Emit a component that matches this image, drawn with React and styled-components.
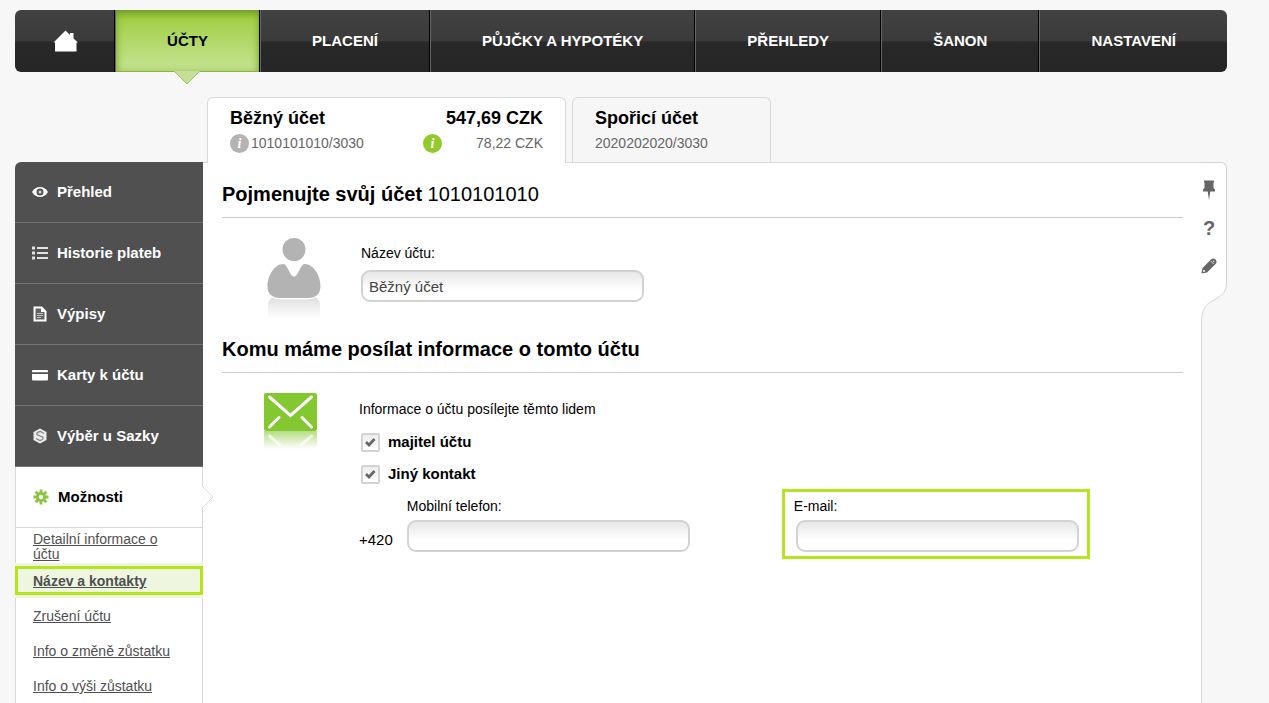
import React from "react"
import styled, { createGlobalStyle, css } from "styled-components"

const GlobalStyle = createGlobalStyle`
  *, *::before, *::after {
    box-sizing: border-box;
  }

  body {
    margin: 0;
    background: #f7f7f7;
    color: #000;
    font-family: "Liberation Sans", Arial, sans-serif;
    font-size: 14px;
    line-height: 16px;
  }

  button, input {
    font: inherit;
  }
`

const Page = styled.div`
  display: flex;
  flex-direction: column;
  min-height: 100vh;
  padding: 10px 42px 0 15px;
`

/* ---------- top navigation ---------- */

const TopNav = styled.nav`
  display: flex;
  height: 62px;
  border-radius: 6px;
  background: linear-gradient(#414141, #3b3b3b 50%, #303030 50%, #282828 54%, #262626);
`

const NavLink = styled.a`
  position: relative;
  display: flex;
  flex: ${props => (props.$home ? "0 0 100px" : "1 1 auto")};
  align-items: center;
  justify-content: center;
  padding: ${props => (props.$home ? "0 0 0 2px" : "0 50px")};
  border-right: 1px solid #000;
  color: #fff;
  font-size: 15px;
  font-weight: bold;
  text-decoration: none;
  white-space: nowrap;

  & + & {
    border-left: 1px solid #686868;
  }

  &:last-child {
    border-right: 0;
  }

  ${props =>
    props.$active &&
    css`
      color: #000;
      background: linear-gradient(#9ccd3c, #a9d456 30%, #c8e397);
      box-shadow: inset 0 5px 8px -2px #6d9422, inset 0 0 8px #93be40, inset 0 -1px 0 #8fb646;
    `}
`

const NavPointer = styled.svg`
  position: absolute;
  top: 61px;
  left: calc(50% - 13px);
`

/* ---------- account tabs ---------- */

const Tabs = styled.div`
  display: flex;
  gap: 6px;
  margin: 25px 0 0 192px;
`

const Tab = styled.a`
  position: relative;
  display: flex;
  align-items: flex-start;
  justify-content: space-between;
  width: ${props => props.$width}px;
  height: 65px;
  padding: 9px 22px 0;
  border: 1px solid #d9d9d9;
  border-bottom: 0;
  border-radius: 6px 6px 0 0;
  background: #f6f6f6;
  color: #000;
  text-decoration: none;

  ${props =>
    props.$active &&
    css`
      background: #fff;

      &::after {
        content: "";
        position: absolute;
        top: 100%;
        left: 0;
        right: 0;
        height: 1px;
        background: #fff;
      }
    `}
`

const TabTitle = styled.div`
  font-size: 18px;
  font-weight: bold;
  line-height: 22px;
  text-align: ${props => (props.$end ? "right" : "left")};
`

const TabNote = styled.div`
  display: flex;
  align-items: center;
  justify-content: space-between;
  gap: 2px;
  height: 20px;
  margin-top: 4px;
  color: #666;
`

const TabAmount = styled.div`
  min-width: 120px;
`

const InfoDot = styled.span`
  display: flex;
  align-items: center;
  justify-content: center;
  width: 19px;
  height: 19px;
  border-radius: 50%;
  background: ${props => props.$color};
  color: #fff;
  font: italic bold 14px/19px "Liberation Serif", serif;
`

/* ---------- content ---------- */

const Content = styled.div`
  display: flex;
  flex: 1;
`

const Sidebar = styled.nav`
  display: flex;
  flex: 0 0 188px;
  flex-direction: column;
`

const SideLink = styled.a`
  position: relative;
  display: flex;
  align-items: center;
  gap: 9px;
  height: 61px;
  padding-left: 17px;
  border-bottom: 1px solid #747474;
  background: #505050;
  color: #fff;
  font-size: 15px;
  font-weight: bold;
  text-decoration: none;

  &:first-child {
    border-top-left-radius: 6px;
  }

  ${props =>
    props.$active &&
    css`
      border: 1px solid #d9d9d9;
      border-top: 0;
      background: #fff;
      color: #000;
    `}
`

const SidePointer = styled.svg`
  position: absolute;
  top: 19px;
  left: 185px;
`

const SubList = styled.ul`
  flex: 1;
  margin: 0;
  padding: 0;
  border: solid #d9d9d9;
  border-width: 0 1px;
  background: #fff;
  list-style: none;
`

const SubItem = styled.li`
  position: relative;
  display: flex;
  align-items: center;
  height: 35px;
  padding: 2px 17px 0;
  line-height: 15px;

  a {
    color: #505050;
  }

  ${props =>
    props.$active &&
    css`
      margin: 0 -1px;
      padding: 2px 18px 0;
      background: #eff6e0;
      font-weight: bold;

      &::after {
        content: "";
        position: absolute;
        inset: 3px 0;
        border: 3px solid #b5e61d;
        pointer-events: none;
      }
    `}
`

const Main = styled.main`
  flex: 1;
  min-width: 0;
  padding: 0 19px;
  border-top: 1px solid #d9d9d9;
  background: #fff;
`

const Heading = styled.h1`
  margin: 0;
  padding: ${props => props.$top}px 0 11px;
  border-bottom: 1px solid #ccc;
  font-size: 20px;
  line-height: 24px;

  span {
    font-weight: normal;
  }
`

const Section = styled.section`
  display: flex;
  align-items: flex-start;
  padding: ${props => props.$top}px 0 0 42px;
`

const Picture = styled.svg`
  flex: none;
  margin-right: ${props => props.$gap}px;
`

const Field = styled.div`
  display: flex;
  flex-direction: column;
  align-items: flex-start;
  gap: ${props => props.$gap}px;
  padding-top: 8px;
`

const TextInput = styled.input`
  width: 283px;
  height: 32px;
  padding: 0 6px;
  border: 2px solid #d3d3d3;
  border-radius: 9px;
  outline: 0;
  background: linear-gradient(#e7e7e7, #fff 65%);
  color: #444;
  font-size: 15px;
`

const Recipients = styled.div`
  display: flex;
  flex: 1;
  flex-direction: column;
  padding-top: 8px;
`

const Intro = styled.p`
  margin: 0 0 8px;
`

const CheckRow = styled.label`
  display: flex;
  align-items: center;
  gap: 8px;
  height: 32px;
  padding: 2px 0 0 2px;
  font-size: 15px;
  font-weight: bold;
`

const CheckBox = styled.span`
  position: relative;
  display: flex;

  input {
    appearance: none;
    width: 19px;
    height: 19px;
    margin: 0;
    border: 2px solid #d3d3d3;
    border-radius: 2px;
    background: linear-gradient(#eee, #fff);
  }

  svg {
    position: absolute;
    top: 4px;
    left: 4px;
    pointer-events: none;
    visibility: hidden;
  }

  input:checked + svg {
    visibility: visible;
  }
`

const Contacts = styled.div`
  display: flex;
  align-items: flex-start;
  gap: 92px;
`

const Phone = styled.div`
  display: flex;
  align-items: flex-end;
  gap: 14px;
  padding-top: 1px;
`

const Prefix = styled.span`
  padding-bottom: 4px;
  font-size: 15px;
`

const EmailBox = styled.div`
  width: 308px;
  height: 70px;
  padding: 6px 9px;
  border: 3px solid #b5e61d;

  ${TextInput} {
    margin: 6px 0 0 2px;
  }
`

/* ---------- tool rail on the right ---------- */

const Rail = styled.aside`
  display: flex;
  flex: 0 0 26px;
  flex-direction: column;
  margin-left: -1px;

  & > svg {
    flex: none;
  }
`

const Tools = styled.div`
  display: flex;
  flex-direction: column;
  height: 120px;
  padding-top: 8px;
  border: solid #d3d3d3;
  border-width: 1px 1px 0 0;
  border-top-right-radius: 6px;
  background: #fff;
`

const ToolButton = styled.button`
  display: flex;
  flex: none;
  align-items: center;
  justify-content: center;
  width: 16px;
  height: 38px;
  padding: 0;
  border: 0;
  background: none;
  color: #666;
  font-size: 20px;
  font-weight: bold;
`

const RailLine = styled.div`
  flex: 1;
  border-left: 1px solid #d9d9d9;
`

/* ---------- icons ---------- */

const HomeIcon = () => (
  <svg width="26" height="22" viewBox="0 0 26 22" fill="#fff">
    <path d="M12.5 0.5 L17 5 V3 H20.5 V8.4 L25 12.5 H23.5 V21.5 H2 V12.5 H0.500 Z" />
  </svg>
)

const EyeIcon = () => (
  <svg width="16" height="16" viewBox="0 0 16 16">
    <path d="M0 8 C3.500 1.200 12.500 1.200 16 8 C12.500 14.800 3.500 14.800 0 8 Z" fill="#fff" />
    <circle cx="8" cy="8" r="2.500" fill="#ddd" stroke="#505050" strokeWidth="2" />
  </svg>
)

const ListIcon = () => (
  <svg width="16" height="16" viewBox="0 0 16 16" fill="#e2e2e2">
    <path d="M0 1.500h3v3H0z M0 6.500h3v3H0z M0 11.500h3v3H0z M5 2h11v2H5z M5 7h11v2H5z M5 12h11v2H5z" />
  </svg>
)

const DocIcon = () => (
  <svg width="16" height="16" viewBox="0 0 16 16">
    <path d="M2.500 1.500 H9.500 L13.500 5.500 V14.500 H2.500 Z" fill="#626262" stroke="#fff" strokeWidth="2" />
    <path d="M9 1v5h5z" fill="#fff" />
    <path d="M5 7.500h6M5 9.500h6M5 11.500h4" stroke="#c4c4c4" />
  </svg>
)

const CardIcon = () => (
  <svg width="16" height="16" viewBox="0 0 16 16" fill="#fff">
    <path d="M1 3h14a1 1 0 0 1 1 1v1.200H0V4a1 1 0 0 1 1-1z" />
    <path d="M0 7h16v5.500a1 1 0 0 1-1 1H1a1 1 0 0 1-1-1z" />
  </svg>
)

const SazkaIcon = () => (
  <svg width="16" height="16" viewBox="0 0 16 16">
    <path d="M8 0.500 L14.500 4 V12 L8 15.500 L1.500 12 V4 Z" fill="#ececec" />
    <path d="M12 5.500 L8.500 3.500 Q4.500 4 4.800 6.500 L11 9.200 Q11.500 12 8 12.500 L4 10.500" fill="none" stroke="#8a8a8a" strokeWidth="1.300" />
  </svg>
)

const GearIcon = () => (
  <svg width="16" height="16" viewBox="0 0 16 16">
    <g stroke="#8cc63f" strokeWidth="2.800">
      <path d="M8 0.500V15.500M0.500 8H15.500M2.700 2.700L13.300 13.300M13.300 2.700L2.700 13.300" />
    </g>
    <circle cx="8" cy="8" r="5" fill="#8cc63f" />
    <circle cx="8" cy="8" r="2.200" fill="#fff" />
  </svg>
)

const PersonPicture = () => (
  <Picture $gap={37} width="60" height="84" viewBox="0 0 60 84">
    <defs>
      <linearGradient id="personFade" x1="0" y1="0" x2="0" y2="1">
        <stop offset="0" stopColor="#e0e0e0" />
        <stop offset="1" stopColor="#fff" />
      </linearGradient>
    </defs>
    <circle cx="30" cy="12.500" r="11.500" fill="#b3b3b3" />
    <path
      d="M19 27 C21 27 22.500 29 24 32 C26.500 37 28 39.500 30 39.500 C32 39.500 33.500 37 36 32 C37.500 29 39 27 41 27 C49 27 56.500 38 56.500 49 C56.500 57 52 61 44 61 H16 C8 61 3.500 57 3.500 49 C3.500 38 11 27 19 27 Z"
      fill="#b3b3b3"
    />
    <path d="M4 81 V66 Q5 62.500 8 60.500 Q12 62.500 18 62.500 H42 Q48 62.500 52 60.500 Q55 62.500 56 66 V81 Z" fill="url(#personFade)" />
  </Picture>
)

const MailPicture = () => (
  <Picture $gap={42} width="53" height="57" viewBox="0 0 53 57">
    <defs>
      <linearGradient id="mailFade" x1="0" y1="0" x2="0" y2="1">
        <stop offset="0" stopColor="#b4dd85" />
        <stop offset="1" stopColor="#fff" />
      </linearGradient>
    </defs>
    <rect y="38" width="53" height="18" fill="url(#mailFade)" />
    <path d="M5.500 43 L16 52 M47.500 43 L37 52" stroke="#fff" strokeWidth="3" strokeLinecap="round" opacity="0.700" />
    <rect width="53" height="38" rx="2" fill="#84c831" />
    <path d="M5.500 4 L26.500 22.500 L47.500 4 M5.500 34 L15 24.500 M47.500 34 L38 24.500" fill="none" stroke="#fff" strokeWidth="3" strokeLinecap="round" />
  </Picture>
)

const PinIcon = () => (
  <svg width="14" height="20" viewBox="0 0 14 20" fill="#666">
    <path d="M2 0.500 H12 V2 L11.500 3 V8 L13 9.500 V11.500 H8.300 L7 20 L5.700 11.500 H1 V9.500 L2.500 8 V3 L2 2 Z" />
  </svg>
)

const PencilIcon = () => (
  <svg width="16" height="16" viewBox="0 0 16 16">
    <path d="M0.500 15.500 L1.500 10 L10 1.500 Q12 -0.500 14.500 1.500 Q16.500 4 14.500 6 L6 14.500 Z" fill="#666" />
    <path d="M10 3.200 L12.800 6" stroke="#fff" strokeWidth="0.800" />
    <circle cx="3" cy="13" r="1" fill="#fff" />
    <circle cx="12.700" cy="3.300" r="0.800" fill="#ddd" />
  </svg>
)

const navItems = ["ÚČTY", "PLACENÍ", "PŮJČKY A HYPOTÉKY", "PŘEHLEDY", "ŠANON", "NASTAVENÍ"]

const sideItems = [
  { label: "Přehled", Icon: EyeIcon },
  { label: "Historie plateb", Icon: ListIcon },
  { label: "Výpisy", Icon: DocIcon },
  { label: "Karty k účtu", Icon: CardIcon },
  { label: "Výběr u Sazky", Icon: SazkaIcon },
  { label: "Možnosti", Icon: GearIcon, active: true },
]

const subItems = [
  { label: "Detailní informace o účtu" },
  { label: "Název a kontakty", active: true },
  { label: "Zrušení účtu" },
  { label: "Info o změně zůstatku" },
  { label: "Info o výši zůstatku" },
]

const Check = ({ children }) => (
  <CheckRow>
    <CheckBox>
      <input type="checkbox" defaultChecked />
      <svg width="11" height="11" viewBox="0 0 11 11">
        <path d="M1 5 L4 8 L9.500 2" fill="none" stroke="#666" strokeWidth="2.800" />
      </svg>
    </CheckBox>
    {children}
  </CheckRow>
)

const App = () => {
  return (
    <Page>
      <GlobalStyle />
      <TopNav>
        <NavLink href="#" $home aria-label="Domů">
          <HomeIcon />
        </NavLink>
        {navItems.map((item, i) => (
          <NavLink href="#" key={item} $active={i === 0}>
            {item}
            {i === 0 &&
            <NavPointer width="26" height="14" viewBox="0 0 26 14">
              <path d="M0 0 H26 L13 13 Z" fill="#c5df98" />
              <path d="M0.500 0.500 L13 13 L25.500 0.500" fill="none" stroke="#9fc35e" />
            </NavPointer>
            }
          </NavLink>
        ))}
      </TopNav>

      <Tabs>
        <Tab href="#" $active $width={359}>
          <div>
            <TabTitle>Běžný účet</TabTitle>
            <TabNote><InfoDot $color="#b3b3b3">i</InfoDot>1010101010/3030</TabNote>
          </div>
          <TabAmount>
            <TabTitle $end>547,69 CZK</TabTitle>
            <TabNote><InfoDot $color="#94c92c">i</InfoDot>78,22 CZK</TabNote>
          </TabAmount>
        </Tab>
        <Tab href="#" $width={199}>
          <div>
            <TabTitle>Spořicí účet</TabTitle>
            <TabNote>2020202020/3030</TabNote>
          </div>
        </Tab>
      </Tabs>

      <Content>
        <Sidebar>
          {sideItems.map(({ label, Icon, active }) => (
            <SideLink href="#" key={label} $active={active}>
              <Icon />
              {label}
              {active &&
              <SidePointer width="13" height="22" viewBox="0 0 13 22">
                <path d="M0 1 H2 L12 11 L2 21 H0 Z" fill="#fff" />
                <path d="M1.500 0.500 L12 11 L1.500 21.500" fill="none" stroke="#d9d9d9" />
              </SidePointer>
              }
            </SideLink>
          ))}
          <SubList>
            {subItems.map(({ label, active }) => (
              <SubItem key={label} $active={active}>
                <a href="#">{label}</a>
              </SubItem>
            ))}
          </SubList>
        </Sidebar>

        <Main>
          <Heading $top={19}>
            Pojmenujte svůj účet <span>1010101010</span>
          </Heading>
          <Section $top={19}>
            <PersonPicture />
            <Field $gap={9}>
              <label htmlFor="accountName">Název účtu:</label>
              <TextInput id="accountName" defaultValue="Běžný účet" />
            </Field>
          </Section>

          <Heading as="h2" $top={16}>Komu máme posílat informace o tomto účtu</Heading>
          <Section $top={20}>
            <MailPicture />
            <Recipients>
              <Intro>Informace o účtu posílejte těmto lidem</Intro>
              <Check>majitel účtu</Check>
              <Check>Jiný kontakt</Check>
              <Contacts>
                <Phone>
                  <Prefix>+420</Prefix>
                  <Field $gap={6}>
                    <label htmlFor="phone">Mobilní telefon:</label>
                    <TextInput id="phone" type="tel" />
                  </Field>
                </Phone>
                <EmailBox>
                  <label htmlFor="email">E-mail:</label>
                  <TextInput id="email" type="email" />
                </EmailBox>
              </Contacts>
            </Recipients>
          </Section>
        </Main>

        <Rail>
          <Tools>
            <ToolButton aria-label="Připnout"><PinIcon /></ToolButton>
            <ToolButton>?</ToolButton>
            <ToolButton aria-label="Upravit"><PencilIcon /></ToolButton>
          </Tools>
          <svg width="26" height="42" viewBox="0 0 26 42">
            <path d="M0 0 H25.500 C25.500 10 22 13 13 18 C5 22 0.500 26 0.500 42 H0 Z" fill="#fff" />
            <path d="M25.500 0 C25.500 10 22 13 13 18 C5 22 0.500 26 0.500 42" fill="none" stroke="#d5d5d5" />
          </svg>
          <RailLine />
        </Rail>
      </Content>
    </Page>
  )
}

export default App
